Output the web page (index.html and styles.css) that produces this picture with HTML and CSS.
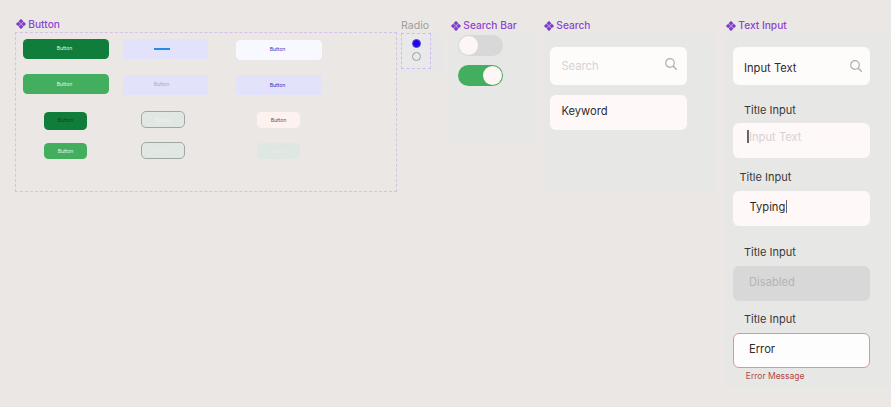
FILE: index.html
```html
<!DOCTYPE html>
<html lang="en">
<head>
<meta charset="utf-8">
<title>Components</title>
<link rel="stylesheet" href="styles.css">
</head>
<body>
<svg width="0" height="0" class="defs">
  <symbol id="component" viewBox="0 0 10 10"><path d="M5 .3 7.1 2.3 5 4.4 2.9 2.3ZM5 5.6 7.1 7.7 5 9.7 2.9 7.7ZM.3 5 2.3 2.9 4.4 5 2.3 7.1ZM5.6 5 7.7 2.9 9.7 5 7.7 7.1Z" fill="#7c3bc9" stroke="#7c3bc9" stroke-width=".6" stroke-linejoin="round"/></symbol>
  <symbol id="search" viewBox="0 0 12 12"><circle cx="5" cy="5" r="4.3" fill="none" stroke="currentColor" stroke-width="1.2"/><path d="M8.2 8.2 11.3 11.3" stroke="currentColor" stroke-width="1.4" stroke-linecap="round"/></symbol>
</svg>
<main class="canvas">
  <section class="group buttons">
    <h2 class="label"><svg><use href="#component"/></svg><span>Button</span></h2>
    <div class="button-frame">
      <div class="col">
        <button class="btn dark">Button</button>
        <button class="btn green">Button</button>
        <button class="btn small dark tall">Button</button>
        <button class="btn small green">Button</button>
      </div>
      <div class="col">
        <button class="btn lilac"><span class="bar"></span></button>
        <button class="btn lilac muted">Button</button>
        <button class="btn small outline">Button</button>
        <button class="btn small outline faint">Button</button>
      </div>
      <div class="col">
        <button class="btn white">Button</button>
        <button class="btn lilac">Button</button>
        <button class="btn small blush">Button</button>
        <button class="btn small mint">Button</button>
      </div>
    </div>
  </section>

  <section class="group radios">
    <h2 class="label plain"><span>Radio</span></h2>
    <div class="radio-panel"><div class="radio-frame">
      <span class="radio on"></span>
      <span class="radio"></span>
    </div></div>
  </section>

  <section class="group toggles">
    <h2 class="label"><svg><use href="#component"/></svg><span>Search Bar</span></h2>
    <div class="panel">
      <div class="toggle"><span></span></div>
      <div class="toggle on"><span></span></div>
    </div>
  </section>

  <section class="group searches">
    <h2 class="label"><svg><use href="#component"/></svg><span>Search</span></h2>
    <div class="panel">
      <div class="field search"><span class="placeholder">Search</span><svg><use href="#search"/></svg></div>
      <div class="field keyword"><span>Keyword</span></div>
    </div>
  </section>

  <section class="group inputs">
    <h2 class="label"><svg><use href="#component"/></svg><span>Text Input</span></h2>
    <div class="panel">
      <div class="field search"><span>Input Text</span><svg><use href="#search"/></svg></div>
      <div class="title first">Title Input</div>
      <div class="field focus"><i class="caret"></i><span class="placeholder">Input Text</span></div>
      <div class="title second">Title Input</div>
      <div class="field typing"><span>Typing</span><i class="caret"></i></div>
      <div class="title third">Title Input</div>
      <div class="field disabled"><span>Disabled</span></div>
      <div class="title fourth">Title Input</div>
      <div class="field error"><span>Error</span></div>
      <div class="message">Error Message</div>
    </div>
  </section>
</main>
</body>
</html>
```

FILE: styles.css
```css
* { box-sizing: border-box; }
body { margin: 0; background: #ebe7e5; font-family: Inter, sans-serif; overflow: hidden; }
.defs { display: block; }
.canvas { display: flex; align-items: flex-start; width: 891px; height: 407px; padding: 18px 0 0 15px; }
.group { flex: none; }

.label { display: flex; align-items: center; gap: 2.5px; height: 14px; margin: 0; padding-left: .8px; font-size: 10.2px; line-height: 14px; font-weight: 500; color: #8b45d3; white-space: nowrap; }
.label svg { width: 10px; height: 10px; flex: none; }
.plain { color: #a19e9d; font-weight: 400; font-size: 10.6px; padding-left: 0; }
.radios .label, .toggles .label, .searches .label, .inputs .label { height: 15px; line-height: 15px; }

.buttons { width: 382px; }
.buttons .label { height: 12px; line-height: 12px; margin-bottom: 2px; }
.button-frame { display: flex; height: 160px; border: 1px dashed #d3c1e8; padding: 6px 0 0 6.5px; }
.col { display: flex; flex-direction: column; align-items: center; width: 86px; }
.col:nth-child(2) { align-items: flex-start; margin-left: 14px; }
.col:nth-child(3) { margin-left: 27px; padding-top: 1px; }
.btn { display: flex; justify-content: center; width: 86px; height: 20px; margin: 0 0 15px; padding: 6px 2px 0 0; border: 0; border-radius: 4.5px; font: 400 5.1px/6px Inter, sans-serif; color: #e4f3e6; }
.btn.small { width: 43px; height: 16px; margin: 3px 0 0; padding: 5px 0 0; }
.btn.small + .btn.small { margin-top: 15px; }
.btn.dark { background: #117d3a; }
.btn.green { background: #42ae5e; padding-top: 7px; }
.btn.small.green { padding-top: 5px; }
.btn.small.tall { height: 18px; color: #0b4823; }
.btn.small.tall + .btn.small { margin-top: 13px; }
.btn.lilac { background: #e2e2fb; color: #3a2bc5; padding-top: 7px; }
.col:nth-child(2) .lilac { width: 85px; border-radius: 2px; padding-right: 7px; }
.btn.lilac.muted { color: #aaa9bd; margin-top: 1px; padding-top: 6px; }
.bar { width: 16px; height: 2px; margin-top: 2px; background: #258ce7; }
.btn.white { background: #f8f8ff; color: #4134c3; }
.btn.small.outline { width: 44px; height: 17px; margin: 1px 0 0 18.5px; border: 1px solid #a0a7a2; border-radius: 5px; background: #e1e7e3; color: #edf3ef; }
.btn.small.outline + .outline { margin-top: 14px; }
.btn.small.faint { color: #e6ede8; }
.btn.small.blush { background: #fdf2f0; color: #5d5858; margin-top: 2px; }
.btn.small.mint { background: #dee7e1; color: #e6eee8; }

.radios { width: 42px; margin-left: 4px; }
.radio-panel { height: 41px; background: #e8e6e6; }
.radio-frame { display: flex; flex-direction: column; align-items: center; gap: 4px; width: 30px; height: 36px; padding-top: 5px; border: 1px dashed #cfbdea; background: #e9e8ea; }
.radio { width: 9px; height: 9px; border: 1px solid #a0a0a0; border-radius: 50%; }
.radio.on { background: #1f04ec; border-color: #5c50d4; }

.panel { background: #e7e7e6; }
.toggles { width: 84px; margin-left: 7px; }
.toggles .panel { height: 110px; padding: 2px 0 0 8px; }
.toggle { display: flex; align-items: center; width: 45px; height: 21px; padding: 0 1px; border-radius: 11px; background: #d8d8d8; }
.toggle span { width: 19px; height: 19px; border-radius: 50%; background: #fdf6f5; }
.toggle.on { justify-content: flex-end; margin-top: 9px; background: #42ae5e; }

.searches { width: 173px; margin-left: 9px; }
.searches .panel { height: 159px; padding: 14px 0 0 7.4px; }
.field { display: flex; align-items: flex-start; width: 136.5px; height: 35px; border-radius: 6px; background: #fef9f8; font-size: 11.2px; line-height: 14px; color: #302b2b; white-space: nowrap; }
.field.search { justify-content: space-between; height: 38px; padding: 12px 10px 0 11px; background: #fefcfb; }
.field svg { width: 12px; height: 12px; color: #afadad; }
.field .placeholder { color: #d6d2d2; }
.field.keyword { margin-top: 10px; padding: 9px 0 0 11px; }
.searches .field svg { margin-top: -1px; }

.inputs { width: 166px; margin-left: 9px; }
.inputs .panel { height: 355px; padding: 14px 0 0 8px; }
.inputs .field.search { padding: 14px 8px 0 11px; }
.inputs .field.search svg { margin-top: -1px; }
.title { height: 14px; padding-left: 11px; font-size: 11px; line-height: 14px; color: #3b3939; }
.first { margin-top: 18px; }
.second { margin-top: 12px; padding-left: 6.5px; }
.third { margin-top: 19px; }
.fourth { margin-top: 11px; }
.caret { width: 1px; height: 13px; background: #6b6262; }
.focus { margin-top: 6px; padding: 7px 0 0 14px; }
.focus .caret { width: 1.5px; margin-right: .5px; }
.typing { margin-top: 7px; padding: 9px 0 0 16.5px; }
.typing .caret { margin-left: .5px; }
.disabled { margin-top: 7px; padding: 9px 0 0 16px; background: #d8d8d8; color: #b5b4b4; }
.error { margin-top: 7px; padding: 8px 0 0 15px; border: 1px solid #dc9696; background: #fefdfd; }
.message { margin-top: 2px; padding-left: 12.8px; font-size: 8.5px; line-height: 12px; color: #b34848; }
```
